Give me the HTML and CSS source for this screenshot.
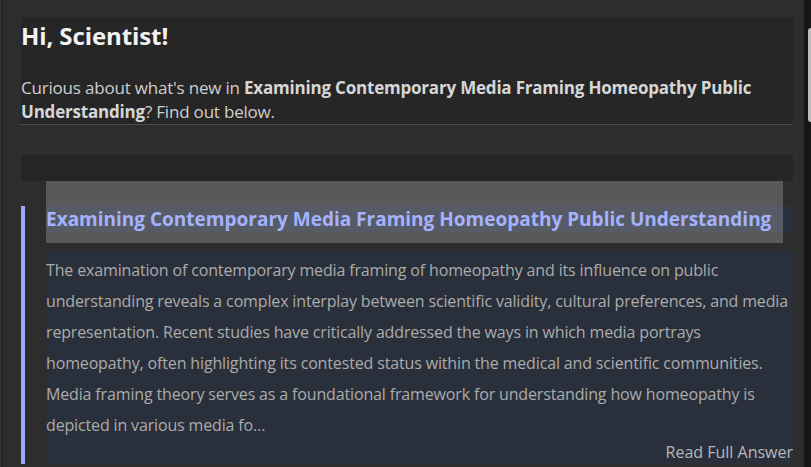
FILE: index.html
```html
<!DOCTYPE html>
<html lang="en">
<head>
<meta charset="utf-8">
<title>Hi, Scientist!</title>
<link rel="stylesheet" href="styles.css">
</head>
<body>
<div class="frame">
  <main class="page">
    <header class="greeting">
      <h1 class="greeting-title">Hi, Scientist!</h1>
      <p class="greeting-text">Curious about what's new in <strong>Examining Contemporary Media Framing Homeopathy Public Understanding</strong>? Find out below.</p>
    </header>
    <section class="results">
      <div class="results-bar"></div>
      <article class="card">
        <h2 class="card-title">Examining Contemporary Media Framing Homeopathy Public Understanding</h2>
        <div class="card-body">
          <p class="card-text">The examination of contemporary media framing of homeopathy and its influence on public understanding reveals a complex interplay between scientific validity, cultural preferences, and media representation. Recent studies have critically addressed the ways in which media portrays homeopathy, often highlighting its contested status within the medical and scientific communities. Media framing theory serves as a foundational framework for understanding how homeopathy is depicted in various media fo...</p>
          <div class="card-actions"><a class="read-more" href="#">Read Full Answer</a></div>
        </div>
      </article>
      <div class="hover-overlay"></div>
    </section>
  </main>
  <div class="scroll-track"><div class="scroll-thumb"></div></div>
</div>
</body>
</html>
```
FILE: styles.css
```css
* { box-sizing: border-box; }
html, body { margin: 0; padding: 0; height: 100%; }
body {
  background: #2d2d2d;
  font-family: "Open Sans", "Noto Sans", sans-serif;
  overflow: hidden;
}
.frame {
  display: flex;
  height: 467px;
}
.page {
  flex: 1;
  border-left: 2px solid #323232;
  box-shadow: inset 1px 0 0 #1c1c1c;
  padding: 17px 11px 0 19px;
}
.greeting {
  background: #262626;
  border-bottom: 1px solid #4d4d4d;
  padding-top: 3px;
}
.greeting-title {
  margin: 0;
  font-size: 24px;
  line-height: 32px;
  font-weight: 700;
  color: #f2f2f2;
  letter-spacing: -0.1px;
}
.greeting-text {
  margin: 24px 0 0;
  font-size: 17px;
  line-height: 24px;
  color: #cfcfcf;
  font-weight: 400;
  letter-spacing: -0.2px;
}
.greeting-text strong { color: #d6d6d6; font-weight: 700; }
.results {
  position: relative;
  margin-top: 30px;
}
.results-bar {
  height: 26px;
  background: #252525;
}
.card {
  margin-top: 25px;
  border-left: 4px solid #a0a8fb;
  padding-left: 21px;
}
.card-title {
  margin: 0;
  background: #2a303c;
  font-size: 19px;
  line-height: 27px;
  font-weight: 700;
  color: #8c9eff;
}
.card-body {
  margin-top: 18px;
  background: #2a303b;
  padding-top: 4px;
}
.card-text {
  margin: 0;
  font-size: 16px;
  line-height: 31px;
  color: #ababab;
  letter-spacing: -0.15px;
}
.card-actions {
  display: flex;
  justify-content: flex-end;
  line-height: 22px;
  padding-bottom: 1px;
}
.read-more {
  font-size: 16px;
  color: #b8b8b8;
  text-decoration: none;
}
.hover-overlay {
  position: absolute;
  top: 26px;
  left: 25px;
  width: 737px;
  height: 62px;
  background: rgba(255, 255, 255, 0.21);
  pointer-events: none;
}
.scroll-track {
  width: 7px;
  background: #161616;
  position: relative;
}
.scroll-thumb {
  position: absolute;
  top: 28px;
  left: 4px;
  width: 6px;
  height: 94px;
  border-radius: 3px;
  background: #bdbdbd;
}
```
